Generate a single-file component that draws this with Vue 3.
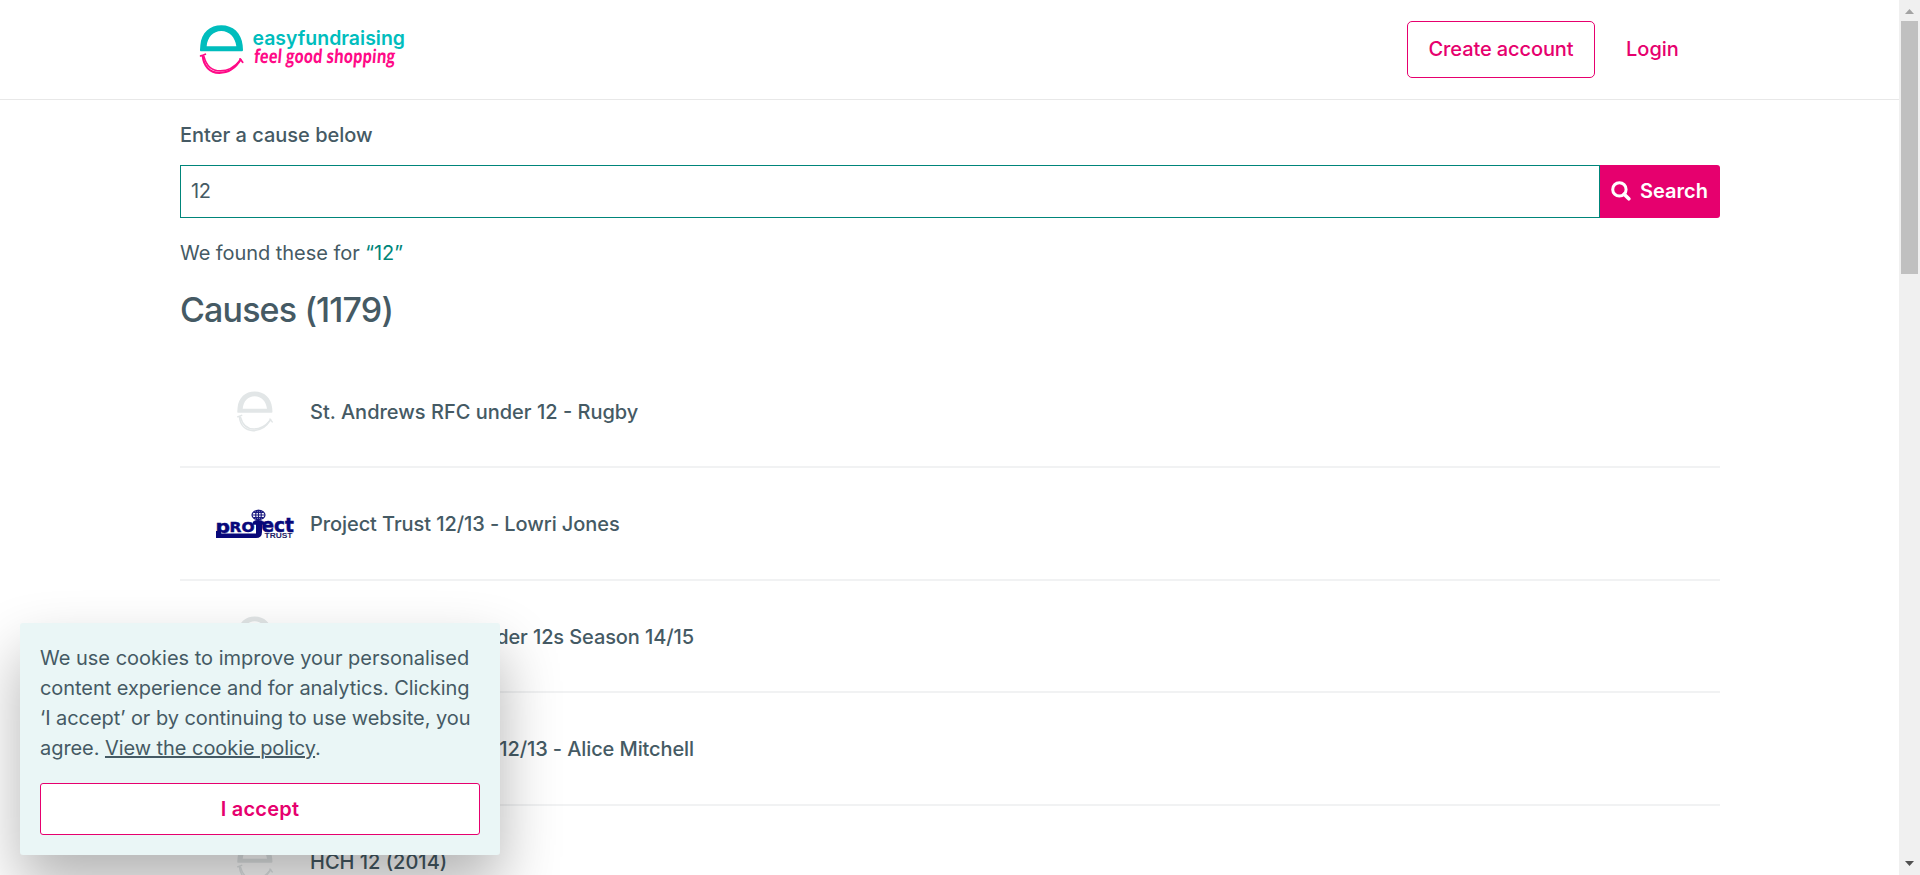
<script setup>
import { ref } from 'vue'

const query = ref('12')
const causes = [
  { name: 'St. Andrews RFC under 12 - Rugby', logo: 'smile', cls: 'c1' },
  { name: 'Project Trust 12/13 - Lowri Jones', logo: 'project', cls: 'c2' },
  { name: 'Under 12s Season 14/15', logo: 'smile', cls: 'c3' },
  { name: '12/13 - Alice Mitchell', logo: 'smile', cls: 'c4' },
  { name: 'HCH 12 (2014)', logo: 'smile', cls: 'c5' },
]
</script>

<template>
  <div class="page">
    <div class="content">
      <header class="header">
        <div class="bar">
          <svg class="brand" width="210" height="54" viewBox="0 0 210 54">
            <g transform="translate(0 .6) scale(.3333)">
              <path fill="#00bdbd" fill-rule="evenodd" d="M2 80 Q0 80 0 76 L1 62 C4 24 30 2 64 2 C99 2 124 25 128 62 L129 76 Q129 80 126 80 Z M20 65 H109 C106 38 88 19 64 19 C39 19 22 38 20 65 Z" />
              <g fill="none" stroke="#ff0a87" stroke-linecap="round" stroke-linejoin="round">
                <path stroke-width="5.5" d="M2 94 Q9 92 16 89" />
                <path stroke-width="6" d="M8 94 C11 125 29 145 58 145 C87 145 108 129 122 105" />
                <path stroke-width="5" d="M12 96 C20 127 37 139 61 139 C86 139 103 129 120 108" />
                <path stroke-width="5.5" d="M120 103 L128 113" />
              </g>
            </g>
            <text class="brand-name" x="52.5" y="20.6" textLength="152.5" lengthAdjust="spacingAndGlyphs">easyfundraising</text>
            <text class="brand-tag" transform="translate(53.5 39.2) skewX(-5)" textLength="141" lengthAdjust="spacingAndGlyphs">feel good shopping</text>
          </svg>
          <nav class="nav">
            <a class="create"><span>Create account</span></a>
            <a class="login">Login</a>
          </nav>
        </div>
      </header>

      <main class="main">
        <label class="label" for="cause">Enter a cause below</label>
        <div class="search">
          <input id="cause" v-model="query" class="field" type="text" />
          <button class="go">
            <svg width="20" height="20" viewBox="0 0 20 20" fill="none" stroke="#fff">
              <circle cx="8.4" cy="8.4" r="6.7" stroke-width="3" />
              <path d="M13.2 13.2 L17.8 17.8" stroke-width="3.6" stroke-linecap="round" />
            </svg>
            <span>Search</span>
          </button>
        </div>
        <p class="found">We found these for <em>“{{ query }}”</em></p>
        <h1 class="title">Causes (1179)</h1>
        <ul class="list">
          <li v-for="c in causes" :key="c.name" class="row">
            <div class="thumb">
              <svg v-if="c.logo === 'smile'" width="36" height="41" viewBox="-1 0 132 150">
                <path fill="#e2e6e7" fill-rule="evenodd" d="M2 80 Q0 80 0 76 L1 62 C4 24 30 2 64 2 C99 2 124 25 128 62 L129 76 Q129 80 126 80 Z M20 65 H109 C106 38 88 19 64 19 C39 19 22 38 20 65 Z" />
                <g fill="none" stroke="#e2e6e7" stroke-linecap="round">
                  <path stroke-width="5.5" d="M2 94 Q9 92 16 89" />
                  <path stroke-width="6" d="M8 94 C11 125 29 145 58 145 C87 145 108 129 122 105" />
                  <path stroke-width="5" d="M12 96 C20 127 37 139 61 139 C86 139 103 129 120 108" />
                  <path stroke-width="5.5" d="M120 103 L128 113" />
                </g>
              </svg>
              <svg v-else width="80" height="30" viewBox="0 0 80 30">
                <g fill="none" stroke="#1a1a80" stroke-width="1.2">
                  <ellipse cx="43.5" cy="6" rx="6.5" ry="4.6" />
                  <ellipse cx="43.5" cy="6" rx="2.8" ry="4.6" />
                  <path d="M37 6 H50 M38.5 3.4 H48.5 M38.5 8.6 H48.5 M43.5 1.4 V10.6" />
                </g>
                <path fill="#08087a" d="M1 22 H6 V24.5 H41 V14 H47 V23 Q47 29 41 29 H1 Z" />
                <g class="pt">
                  <text x="0.5" y="23.5" font-size="18" textLength="14.5" lengthAdjust="spacingAndGlyphs">p</text>
                  <text x="14.5" y="23" font-size="14.5" textLength="25" lengthAdjust="spacingAndGlyphs">RO</text>
                  <path d="M38 13 Q43 9 49 13 V15.5 H38 Z" />
                  <text x="46.5" y="23" font-size="20" textLength="32.5" lengthAdjust="spacingAndGlyphs">ect</text>
                </g>
                <text class="trust" x="49.5" y="29.3" textLength="28" lengthAdjust="spacingAndGlyphs">TRUST</text>
              </svg>
            </div>
            <span class="name" :class="c.cls">{{ c.name }}</span>
          </li>
        </ul>
      </main>
    </div>

    <div class="scrollbar">
      <svg width="21" height="21" viewBox="0 0 21 21"><path fill="#a3a3a3" d="M6 14 L10.5 9 L15 14 Z" /></svg>
      <div class="grip"></div>
      <svg class="down" width="21" height="21" viewBox="0 0 21 21"><path fill="#505050" d="M6 7 L10.5 12 L15 7 Z" /></svg>
    </div>

    <aside class="cookie">
      <p>
        <span class="l1">We use cookies to improve your personalised</span><br />
        <span class="l2">content experience and for analytics. Clicking</span><br />
        <span class="l3">‘I accept’ or by continuing to use website, you</span><br />
        <span class="l4">agree. <u>View the cookie policy</u>.</span>
      </p>
      <button class="accept">I accept</button>
    </aside>
  </div>
</template>

<style>
body { margin: 0; overflow: hidden; }
</style>

<style scoped>
.page {
  display: flex;
  width: 100%;
  height: 875px;
  overflow: hidden;
  background: #fff;
  color: #455a64;
  font: 400 20px/30px Inter, "Liberation Sans", sans-serif;
}
.page * { box-sizing: border-box; }
.content { flex: 1; min-width: 0; height: 875px; overflow: hidden; }
.header { height: 100px; border-bottom: 1px solid #e8e8e8; }
.bar {
  display: flex;
  justify-content: space-between;
  align-items: flex-start;
  width: 1540px;
  margin: 0 auto 0 180px;
  padding: 21px 40px 0 20px;
}
.brand { margin-top: 3px; overflow: visible; }
.brand-name { fill: #00bdbd; font: 600 20px Inter, sans-serif; }
.brand-tag { fill: #ff0a87; font: 700 19px "Open Sans", sans-serif; }
.nav { display: flex; align-items: center; color: #e6006e; font-weight: 500; }
.create {
  display: flex;
  align-items: center;
  justify-content: center;
  width: 188px;
  height: 57px;
  padding-bottom: 2px;
  border: 1px solid #e6006e;
  border-radius: 5px;
  letter-spacing: -.1px;
  white-space: nowrap;
}
.login { width: 85px; padding: 0 0 2px 31px; }
.main { width: 1540px; margin-left: 180px; }
.label { display: block; padding-top: 20px; height: 65px; font-weight: 500; }
.search { display: flex; height: 53px; }
.field {
  flex: 1;
  border: 1px solid #00857a;
  padding: 0 10px 1px;
  font: inherit;
  letter-spacing: -.5px;
  color: inherit;
  outline: none;
  border-radius: 0;
}
.go {
  display: flex;
  align-items: center;
  gap: 9px;
  width: 120px;
  border: 0;
  border-radius: 0 3px 3px 0;
  padding: 0 0 1px 11px;
  background: #e6006e;
  color: #fff;
  font: inherit;
  font-weight: 600;
}
.found { margin: 20px 0 0; letter-spacing: -.05px; }
.found em { font-style: normal; color: #00857a; }
.title { margin: 20px 0 0; font-size: 34px; line-height: 44px; font-weight: 500; letter-spacing: -.85px; }
.list { list-style: none; margin: 23.5px 0 0; padding: 0; }
.row {
  display: flex;
  align-items: center;
  gap: 15px;
  height: 112.5px;
  padding: 2px 0 0 35px;
  border-bottom: 2px solid #f1f2f3;
}
.thumb { display: flex; justify-content: center; width: 80px; }
.pt { fill: #08087a; stroke: #08087a; stroke-width: .5; font-family: "DejaVu Sans", sans-serif; font-weight: 700; }
.trust { fill: #222266; font: 700 6.5px "Liberation Sans", sans-serif; }
.name { font-weight: 500; white-space: nowrap; }
.c2 { letter-spacing: -.08px; }
.c3, .c4 { width: 384px; text-align: right; }
.c3, .c4 { letter-spacing: -.1px; }
.scrollbar {
  display: flex;
  flex-direction: column;
  align-items: center;
  width: 21px;
  height: 875px;
  background: #f0f0f0;
}
.grip { width: 17px; height: 253px; background: #c0c0c0; }
.down { margin-top: auto; }
.cookie {
  position: absolute;
  left: 20px;
  top: 623px;
  width: 480px;
  height: 232px;
  padding: 20px;
  border-radius: 3px;
  background: #eaf6f6;
  box-shadow: 0 30px 60px rgba(0, 0, 0, .3);
}
.cookie p { margin: 0 0 20px; white-space: nowrap; }
.l2, .l3, .l4 { letter-spacing: -.06px; }
.accept {
  display: block;
  width: 440px;
  height: 52px;
  border: 1px solid #e6006e;
  border-radius: 3px;
  background: #fff;
  color: #e6006e;
  font: inherit;
  font-weight: 600;
  letter-spacing: .2px;
}
</style>
